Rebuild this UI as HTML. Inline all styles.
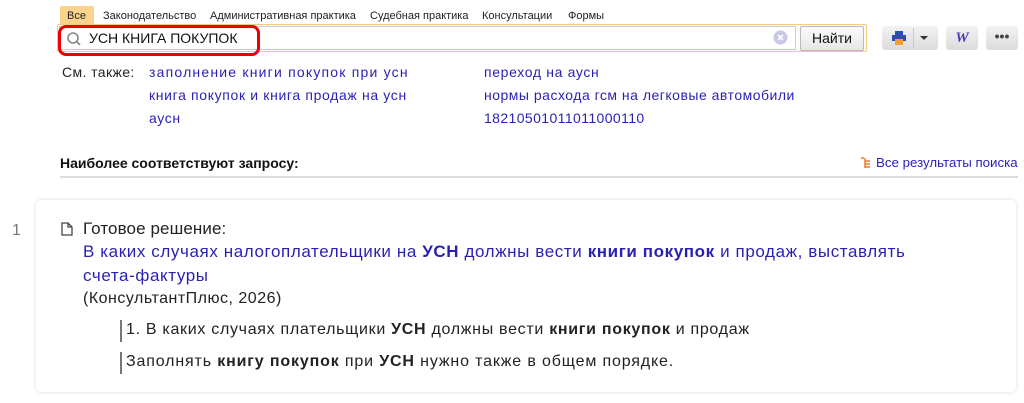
<!DOCTYPE html>
<html><head><meta charset="utf-8"><style>
body{margin:0;width:1024px;height:403px;background:#fff;font-family:"Liberation Sans",sans-serif;position:relative;overflow:hidden}
.a{position:absolute;white-space:nowrap}
.tab{font-size:11px;color:#222;top:10px}
.lnk{color:#2a1fb5;font-size:14px;letter-spacing:0.65px}
.blk{color:#222}
</style></head><body>
<div class="a" style="left:60px;top:6px;width:34px;height:18px;background:#fbd38d;border-radius:2px 2px 0 0"></div>
<div class="a tab" style="left:67px">Все</div>
<div class="a tab" style="left:103px">Законодательство</div>
<div class="a tab" style="left:210px">Административная практика</div>
<div class="a tab" style="left:370px">Судебная практика</div>
<div class="a tab" style="left:482px">Консультации</div>
<div class="a tab" style="left:568px">Формы</div>
<div class="a" style="left:57px;top:24px;width:808px;height:26px;border:1px solid #f6c97a;background:#fff;border-radius:2px"></div>
<div class="a" style="left:59px;top:26px;width:735px;height:22px;border:1px solid #ccc;background:#fff"></div>
<div class="a" style="left:58px;top:25px;width:196px;height:25px;border:3px solid #e00;border-radius:8px"></div>
<svg class="a" style="left:66px;top:31px" width="16" height="16"><circle cx="7" cy="7" r="5" fill="none" stroke="#888" stroke-width="1.6"/><line x1="10.5" y1="10.5" x2="14" y2="14" stroke="#888" stroke-width="1.8"/></svg>
<div class="a" style="left:89px;top:30px;font-size:14px;color:#111">УСН КНИГА ПОКУПОК</div>
<svg class="a" style="left:773px;top:30px" width="15" height="15"><circle cx="7.5" cy="7.5" r="7" fill="#c6c8e4"/><path d="M5 5l5 5M10 5l-5 5" stroke="#fff" stroke-width="1.6"/></svg>
<div class="a" style="left:800px;top:26px;width:62px;height:23px;border:1px solid #bbb;border-radius:2px;background:linear-gradient(#fbfbfb,#e6e6e6);font-size:14px;text-align:center;line-height:23px;color:#111">Найти</div>
<div class="a" style="left:882px;top:26px;width:56px;height:24px;border-radius:3px;background:linear-gradient(#f2f2f2,#dcdcdc)"></div>
<div class="a" style="left:913px;top:28px;width:1px;height:20px;background:#c8c8c8"></div>
<svg class="a" style="left:891px;top:30px" width="16" height="16"><rect x="4" y="1" width="8" height="4" fill="#2a4fb0"/><rect x="1" y="5" width="14" height="6" fill="#2a4fb0"/><rect x="4" y="9" width="8" height="6" fill="#f2a030"/></svg>
<svg class="a" style="left:920px;top:36px" width="8" height="5"><path d="M0 0h8L4 4z" fill="#333"/></svg>
<div class="a" style="left:946px;top:26px;width:32px;height:24px;border-radius:3px;background:linear-gradient(#f2f2f2,#dcdcdc);text-align:center;font:italic bold 15px 'Liberation Serif',serif;color:#4a3ab5;line-height:24px">W</div>
<div class="a" style="left:986px;top:26px;width:32px;height:24px;border-radius:3px;background:linear-gradient(#f2f2f2,#dcdcdc);text-align:center;font-size:14px;font-weight:bold;color:#444;line-height:20px">•••</div>
<div class="a blk" style="left:62px;top:64px;font-size:14px;letter-spacing:0.4px">См. также:</div>
<div class="a lnk" style="left:149px;top:64px;letter-spacing:1.2px">заполнение книги покупок при усн</div>
<div class="a lnk" style="left:149px;top:87px">книга покупок и книга продаж на усн</div>
<div class="a lnk" style="left:149px;top:110px">аусн</div>
<div class="a lnk" style="left:484px;top:64px">переход на аусн</div>
<div class="a lnk" style="left:484px;top:87px;letter-spacing:0.5px">нормы расхода гсм на легковые автомобили</div>
<div class="a lnk" style="left:484px;top:110px;letter-spacing:0.4px">18210501011011000110</div>
<div class="a" style="left:60px;top:155px;font-size:14px;font-weight:bold;color:#111">Наиболее соответствуют запросу:</div>
<div class="a" style="left:60px;top:176px;width:958px;height:2px;background:#ddd"></div>
<svg class="a" style="left:860px;top:157px" width="12" height="12"><path d="M1 1h3M5 1v10M5 4h5M5 7h5M5 10h5" stroke="#f07a30" stroke-width="1.5" fill="none"/></svg>
<div class="a" style="left:876px;top:155px;font-size:13.3px;color:#2a1fb5">Все результаты поиска</div>
<div class="a" style="left:36px;top:200px;width:980px;height:192px;border-radius:6px;box-shadow:0 0 4px rgba(0,0,0,.15);background:#fff"></div>
<div class="a" style="left:12px;top:222px;font-size:16px;color:#777">1</div>
<svg class="a" style="left:61px;top:222px" width="12" height="14"><path d="M1 1h6l4 4v8H1z M7 1v4h4" fill="none" stroke="#444" stroke-width="1.3"/></svg>
<div class="a blk" style="left:83px;top:219px;font-size:17px;letter-spacing:0.1px">Готовое решение:</div>
<div class="a" style="left:83px;top:242px;font-size:17px;color:#2a1fb5;letter-spacing:0.6px">В каких случаях налогоплательщики на <b>УСН</b> должны вести <b>книги покупок</b> и продаж, выставлять</div>
<div class="a" style="left:83px;top:266px;font-size:17px;color:#2a1fb5;letter-spacing:0.6px">счета-фактуры</div>
<div class="a blk" style="left:83px;top:290px;font-size:16px;letter-spacing:0.5px">(КонсультантПлюс, 2026)</div>
<div class="a" style="left:120px;top:320px;width:2px;height:22px;background:#777"></div>
<div class="a blk" style="left:126px;top:321px;font-size:16px;letter-spacing:0.7px">1. В каких случаях плательщики <b>УСН</b> должны вести <b>книги покупок</b> и продаж</div>
<div class="a" style="left:120px;top:352px;width:2px;height:22px;background:#777"></div>
<div class="a blk" style="left:126px;top:353px;font-size:16px;letter-spacing:0.85px">Заполнять <b>книгу покупок</b> при <b>УСН</b> нужно также в общем порядке.</div>
</body></html>
